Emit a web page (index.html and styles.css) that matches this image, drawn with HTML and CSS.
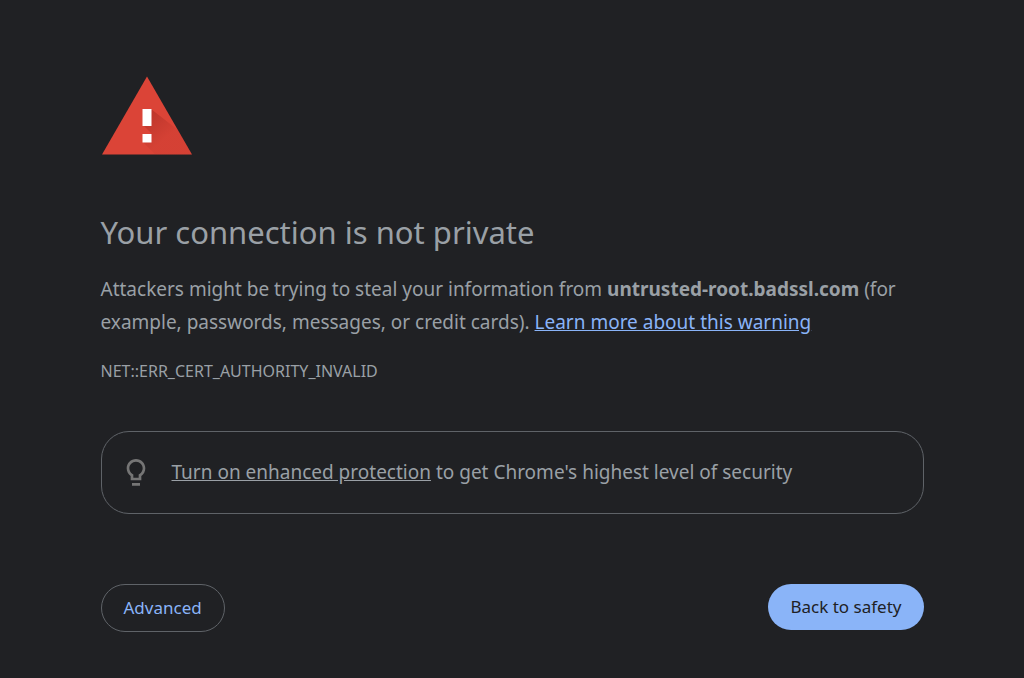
FILE: index.html
```html
<!DOCTYPE html>
<html lang="en">
<head>
    <meta charset="UTF-8">
    <meta name="viewport" content="width=device-width, initial-scale=1.0">
    <title>Privacy error</title>
    <link rel="stylesheet" href="styles.css">
</head>
<body>
    <main class="interstitial">
        <svg class="warning-icon" viewBox="0 0 91 79" aria-hidden="true">
            <defs>
                <linearGradient id="shade" gradientUnits="userSpaceOnUse" x1="45" y1="44" x2="62" y2="64">
                    <stop offset="0" stop-color="#a52a22" stop-opacity="0.5"/>
                    <stop offset="1" stop-color="#a52a22" stop-opacity="0.12"/>
                </linearGradient>
            </defs>
            <path fill="#db4437" d="M46 .5L91 78.5H1z"/>
            <path fill="url(#shade)" d="M50 33L77 54L91 78.5H54L42 66H50V57L42 49H50z"/>
            <path fill="#fff" d="M41.500 33h9v17h-9zM41.500 58h9v8.500h-9z"/>
        </svg>

        <h1>Your connection is not private</h1>
        <p class="message">Attackers might be trying to steal your information from <strong>untrusted-root.badssl.com</strong> (for example, passwords, messages, or credit cards). <a class="learn-more" href="#">Learn more about this warning</a></p>
        <p class="error-code">NET::ERR_CERT_AUTHORITY_INVALID</p>

        <div class="protection">
            <svg class="bulb-icon" viewBox="0 0 24 24" aria-hidden="true">
                <path d="M9 19.500h6v2H9zM12 1.500C8.140 1.500 5 4.640 5 8.500c0 2.380 1.190 4.470 3 5.740V17.500h8v-3.260c1.810-1.270 3-3.360 3-5.740 0-3.860-3.140-7-7-7zm2.850 11.100l-.850.600V15.500h-4v-2.300l-.850-.600C7.800 11.660 7 10.130 7 8.500c0-2.760 2.240-5 5-5s5 2.240 5 5c0 1.630-.800 3.160-2.150 4.100z"/>
            </svg>
            <p><a href="#">Turn on enhanced protection</a> to get Chrome's highest level of security</p>
        </div>

        <div class="buttons">
            <button type="button" class="secondary">Advanced</button>
            <button type="button" class="primary">Back to safety</button>
        </div>
    </main>
</body>
</html>
```

FILE: styles.css
```css
body {
    margin: 0;
    background-color: #202124;
    color: #9aa0a6;
    font-family: 'Segoe UI', 'Noto Sans', sans-serif;
    font-size: 19px;
    line-height: 33px;
}
.interstitial {
    box-sizing: border-box;
    max-width: 823px;
    margin: 0 auto;
    padding: 76px 0 40px;
}
.warning-icon {
    display: block;
    width: 91px;
    height: 79px;
}
h1 {
    margin: 56px 0 20px;
    font-size: 31px;
    font-weight: 400;
    line-height: 42px;
}
p {
    margin: 0;
}
.learn-more {
    color: #8ab4f8;
}
.error-code {
    margin-top: 20px;
    font-size: 16px;
    line-height: 24px;
}
.protection {
    display: flex;
    align-items: center;
    gap: 20px;
    margin-top: 48px;
    padding: 24px 18px;
    border: 1px solid #5f6368;
    border-radius: 28px;
}
.protection a {
    color: inherit;
}
.bulb-icon {
    flex: none;
    width: 32px;
    height: 32px;
    fill: #757575;
}
.buttons {
    display: flex;
    justify-content: space-between;
    align-items: flex-start;
    margin-top: 70px;
}
button {
    padding: 11px 22px;
    border: 0;
    border-radius: 24px;
    font-family: inherit;
    font-size: 17px;
    line-height: 24px;
    cursor: pointer;
}
.primary {
    background-color: #8ab4f8;
    color: #202124;
}
.secondary {
    border: 1px solid #5f6368;
    background-color: transparent;
    color: #8ab4f8;
}
```
